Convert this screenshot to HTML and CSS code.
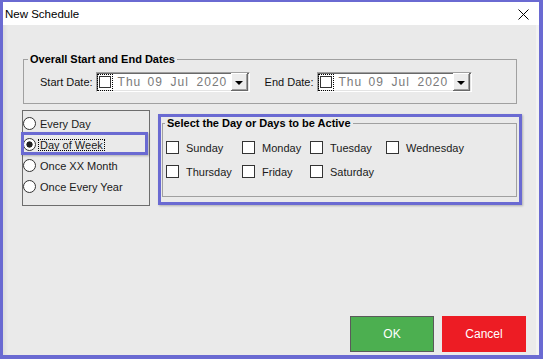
FILE: index.html
```html
<!DOCTYPE html>
<html lang="en">
  <head>
    <meta charset="UTF-8" />
    <meta name="viewport" content="width=device-width, initial-scale=1.0" />
    <title>New Schedule</title>
    <link rel="stylesheet" href="styles.css">
  </head>
  <body>
    <div class="window">
      <div class="titlebar">
        <span class="title">New Schedule</span>
        <svg class="close" width="11" height="11" viewBox="0 0 11 11">
          <path d="M0.5 0.5 L10.5 10.5 M10.5 0.5 L0.5 10.5" stroke="#000" stroke-width="1" fill="none" />
        </svg>
      </div>

      <div class="content">
        <fieldset class="group dates">
          <legend>Overall Start and End Dates</legend>
          <div class="date-row">
            <span class="date-label">Start Date:</span>
            <div class="picker">
              <span class="focus"><span class="pick-check"></span></span>
              <span class="date-text"><span class="w-thu">Thu</span><span class="w-day">09</span><span class="w-mon">Jul</span><span>2020</span></span>
              <span class="drop"><span class="arrow"></span></span>
            </div>
            <span class="date-label">End Date:</span>
            <div class="picker wide">
              <span class="focus"><span class="pick-check"></span></span>
              <span class="date-text"><span class="w-thu">Thu</span><span class="w-day">09</span><span class="w-mon">Jul</span><span>2020</span></span>
              <span class="drop"><span class="arrow"></span></span>
            </div>
          </div>
        </fieldset>

        <div class="middle">
          <div class="modes">
            <label class="mode"><input type="radio" name="mode" /><span>Every Day</span></label>
            <label class="mode"><input type="radio" name="mode" checked /><span class="focused">Day of Week</span></label>
            <label class="mode"><input type="radio" name="mode" /><span>Once XX Month</span></label>
            <label class="mode"><input type="radio" name="mode" /><span>Once Every Year</span></label>
          </div>

          <fieldset class="group days">
            <legend>Select the Day or Days to be Active</legend>
            <div class="day-grid">
              <label class="day"><input type="checkbox" /><span>Sunday</span></label>
              <label class="day"><input type="checkbox" /><span>Monday</span></label>
              <label class="day"><input type="checkbox" /><span>Tuesday</span></label>
              <label class="day"><input type="checkbox" /><span>Wednesday</span></label>
              <label class="day"><input type="checkbox" /><span>Thursday</span></label>
              <label class="day"><input type="checkbox" /><span>Friday</span></label>
              <label class="day"><input type="checkbox" /><span>Saturday</span></label>
            </div>
          </fieldset>
        </div>

        <div class="actions">
          <button class="btn ok">OK</button>
          <button class="btn cancel">Cancel</button>
        </div>
      </div>

      <!-- highlight marks drawn over the dialog -->
      <div class="mark mark-mode"></div>
      <div class="mark mark-days"></div>
    </div>
  </body>
</html>
```

FILE: styles.css
```css
body {
  margin: 0;
  font-family: "Liberation Sans", Arial, sans-serif;
  font-size: 11px;
  color: #1a1a1a;
}
.window {
  position: relative;
  width: 543px;
  height: 359px;
  box-sizing: border-box;
  border-style: solid;
  border-color: #6a6ad2;
  border-width: 2px 4px 4px 3px;
  display: flex;
  flex-direction: column;
  background-color: #eaeaea;
}
.titlebar {
  height: 23px;
  flex: none;
  background-color: #fff;
  display: flex;
  align-items: center;
  justify-content: space-between;
  padding: 0 10px 0 2px;
}
.title {
  font-size: 11.5px;
  color: #000;
}
.close {
  display: block;
  margin-top: 1px;
}
.content {
  flex: 1;
  display: flex;
  flex-direction: column;
  box-shadow: inset 5px 0 4px -3px rgba(0, 0, 0, 0.07), inset -3px 0 0 #f2f2f2;
}
.group {
  margin: 0;
  border: 1px solid #a0a0a0;
  padding: 0 0 0 2px;
  min-inline-size: 0;
}
.group legend {
  padding: 0 2px;
  font-weight: bold;
  font-size: 11px;
  line-height: 15px;
  color: #000;
}
.dates {
  margin: 27px 0 0 20px;
  width: 494px;
  box-sizing: border-box;
  padding: 0 0 11px 4px;
}
.dates legend {
  padding: 0 2px;
}
.date-row {
  display: flex;
  align-items: center;
  margin-top: 5px;
  padding-left: 12px;
}
.date-label {
  color: #111;
  margin-right: 3px;
}
.picker {
  width: 154px;
  height: 20px;
  box-sizing: border-box;
  display: flex;
  align-items: center;
  background-color: #fff;
  border: 1px solid;
  border-color: #a0a0a0 #fff #fff #a0a0a0;
  box-shadow: inset 1px 1px 0 #696969, inset -1px -1px 0 #e3e3e3;
  padding-right: 1px;
  margin-right: 15px;
}
.picker.wide {
  width: 155px;
  margin-right: 0;
}
.focus {
  width: 16px;
  height: 17px;
  box-sizing: border-box;
  border: 1px dotted #000;
  display: flex;
  align-items: center;
  justify-content: center;
}
.pick-check {
  width: 12px;
  height: 12px;
  box-sizing: border-box;
  border: 1px solid #333;
  background-color: #fff;
}
.date-text {
  display: flex;
  margin-left: 5px;
  font-size: 12px;
  letter-spacing: 1px;
  color: #7a7a7a;
}
.w-thu {
  width: 30px;
}
.w-day {
  width: 23px;
}
.w-mon {
  width: 26px;
}
.drop {
  margin-left: auto;
  width: 17px;
  height: 18px;
  box-sizing: border-box;
  background-color: #ececec;
  box-shadow: inset -1px -1px 0 #696969, inset 1px 1px 0 #fff, inset -2px -2px 0 #a0a0a0;
  display: flex;
  align-items: center;
  justify-content: center;
}
.arrow {
  width: 0;
  height: 0;
  border-left: 4px solid transparent;
  border-right: 4px solid transparent;
  border-top: 4px solid #000;
  margin-top: 1px;
}
.middle {
  display: flex;
  align-items: flex-start;
  margin-top: 6px;
}
.modes {
  margin-left: 19px;
  width: 128px;
  height: 96px;
  box-sizing: border-box;
  border: 1px solid #6d6d6d;
  padding-top: 2px;
  display: flex;
  flex-direction: column;
}
.mode {
  height: 21px;
  display: flex;
  align-items: center;
}
.mode input {
  appearance: none;
  margin: 0 2px 0 0;
  width: 13px;
  height: 13px;
  border: 1px solid #333;
  border-radius: 50%;
  background-color: #fff;
}
.mode input:checked {
  background: radial-gradient(circle, #222 0, #222 2.8px, #fff 3.4px);
}
.mode span {
  border: 1px dotted transparent;
  padding: 0 1px;
  line-height: 10px;
}
.mode span.focused {
  border-color: #000;
}
.days {
  margin: 6px 0 0 12px;
  width: 355px;
  box-sizing: border-box;
  padding: 0 0 18px 2px;
}
.day-grid {
  display: grid;
  grid-template-columns: 76px 68px 76px auto;
  row-gap: 11px;
  margin: 10px 0 0 1px;
}
.day {
  display: flex;
  align-items: center;
  height: 13px;
}
.day input {
  appearance: none;
  margin: 0 7px 0 0;
  width: 13px;
  height: 13px;
  border: 1px solid #333;
  background-color: #fff;
}
.actions {
  margin-top: auto;
  display: flex;
  justify-content: flex-end;
  gap: 8px;
  padding: 0 13px 3px 0;
}
.btn {
  width: 84px;
  height: 36px;
  font-family: "Liberation Sans", Arial, sans-serif;
  font-size: 12px;
  color: #fff;
  border: none;
  padding: 0;
}
.ok {
  background-color: #4caf50;
  border: 1px solid #5a5a5a;
}
.cancel {
  background-color: #ed1c24;
}
.mark {
  position: absolute;
  box-sizing: border-box;
  border: 3px solid #6a6ad2;
  box-shadow: 1px 1px 2px rgba(0, 0, 0, 0.25);
}
.mark-mode {
  left: 18px;
  top: 130px;
  width: 127px;
  height: 23px;
}
.mark-days {
  left: 155px;
  top: 112px;
  width: 364px;
  height: 91px;
}
```
